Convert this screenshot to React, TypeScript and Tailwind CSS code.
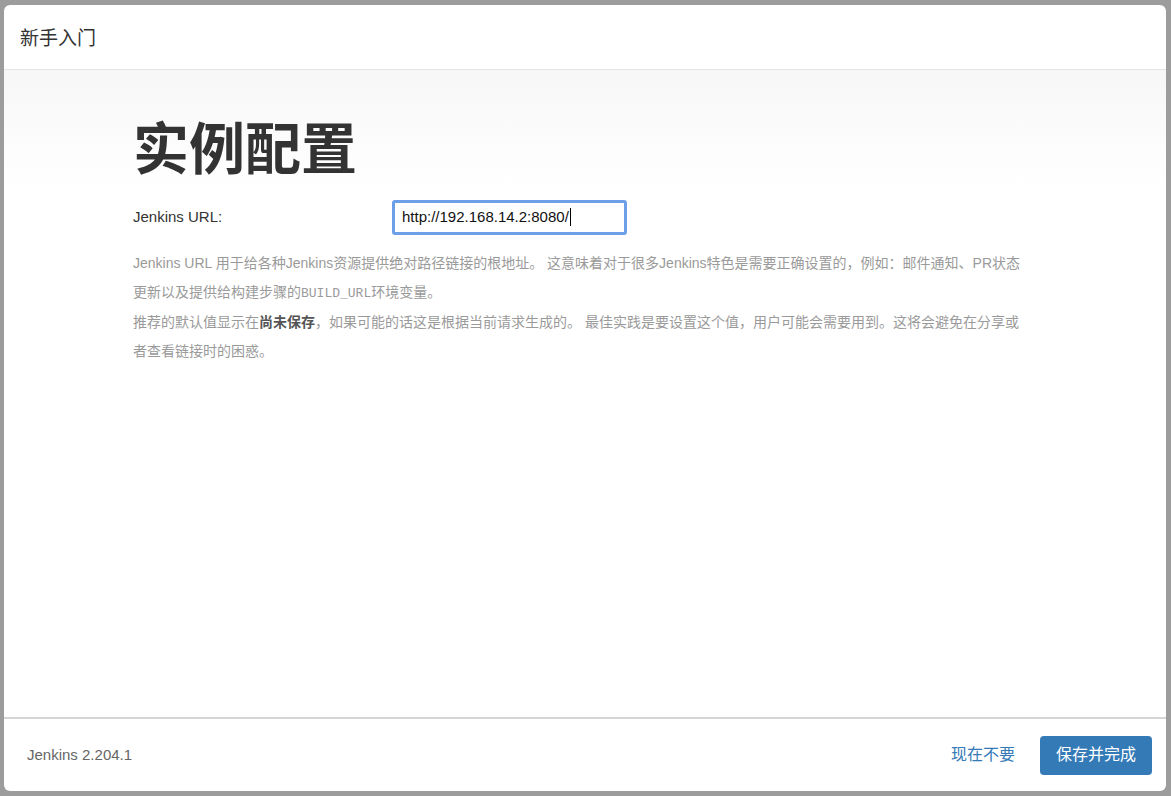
export default function App() {
  const sans = "font-['Liberation_Sans','Noto_Sans_CJK_SC',sans-serif]";
  return (
    <div className={`w-[1171px] h-[796px] bg-[#9c9c9c] pt-[5px] pl-[4px] pr-[5px] pb-[5px] ${sans}`}>
      <div className="flex h-full flex-col overflow-hidden rounded-[6px] bg-white">
        <div className="flex h-[65px] shrink-0 items-center border-b border-[#e5e5e5] px-[16px] pt-[5px]">
          <h1 className="text-[19px] text-[#333]">新手入门</h1>
        </div>

        <div className="flex-1 bg-gradient-to-b from-[#f7f7f7] to-white to-[120px] pl-[129px]">
          <h2 className="mt-[49px] text-[56px] font-bold leading-[1.1] text-[#333]">实例配置</h2>

          <div className="mt-[19px] flex items-center">
            <label className="w-[259px] text-[15px] text-[#333]">Jenkins URL:</label>
            <div className="flex h-[35px] w-[235px] items-center rounded-[3px] border-[3px] border-[#6d9ee8] bg-white px-[7px] text-[15px] text-[#111]">
              http://192.168.14.2:8080/<span className="ml-[1px] inline-block h-[18px] w-[1px] bg-black" />
            </div>
          </div>

          <div className="mt-[14px] w-[890px] text-[14px] leading-[29.3px] text-[#9a9a9a]">
            <p>
              Jenkins URL 用于给各种Jenkins资源提供绝对路径链接的根地址。 这意味着对于很多Jenkins特色是需要正确设置的，例如：邮件通知、PR状态更新以及提供给构建步骤的
              <code className="font-['Liberation_Mono',monospace] text-[13px]">BUILD_URL</code>环境变量。
            </p>
            <p>
              推荐的默认值显示在<strong className="font-bold text-[#555]">尚未保存</strong>，如果可能的话这是根据当前请求生成的。 最佳实践是要设置这个值，用户可能会需要用到。这将会避免在分享或者查看链接时的困惑。
            </p>
          </div>
        </div>

        <div className="flex h-[74px] shrink-0 items-center justify-between border-t-2 border-[#d5d5d5] pl-[23px] pr-[14px]">
          <span className="text-[15px] text-[#666]">Jenkins 2.204.1</span>
          <div className="flex items-center gap-[25px]">
            <a className="text-[16px] text-[#337ab7]">现在不要</a>
            <button className="h-[39px] w-[112px] rounded-[4px] bg-[#337ab7] text-[16px] text-white">保存并完成</button>
          </div>
        </div>
      </div>
    </div>
  );
}
